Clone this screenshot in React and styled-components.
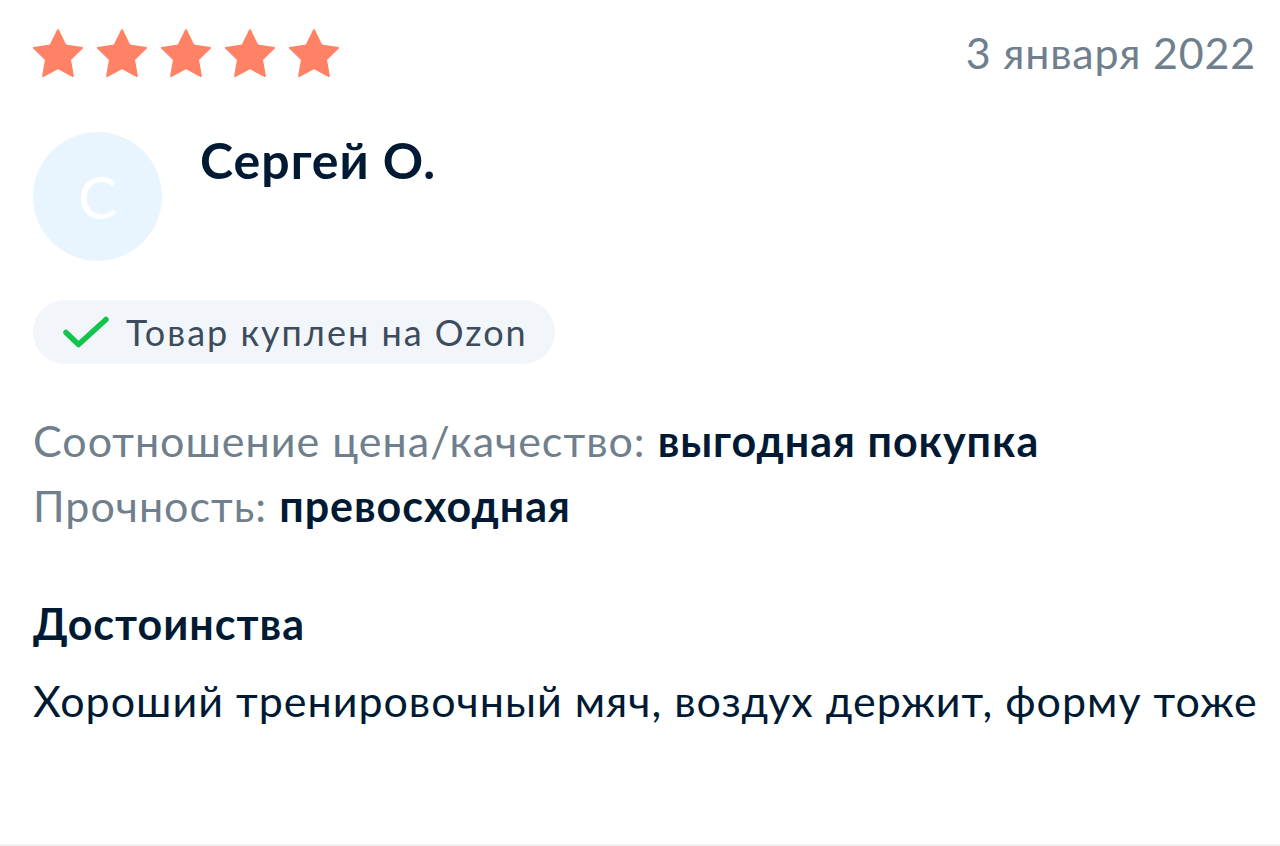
import React from "react";
import styled, { createGlobalStyle } from "styled-components";

const GlobalStyle = createGlobalStyle`
  html, body {
    margin: 0;
    padding: 0;
    background: #fff;
  }
  body {
    font-family: Lato, "Noto Sans", sans-serif;
    color: #001a34;
  }
`;

const Card = styled.div`
  box-sizing: border-box;
  width: 1280px;
  height: 846px;
  padding: 27px 24px 0 33px;
  border-bottom: 2px solid #f0f0f0;
  display: flex;
  flex-direction: column;
`;

const TopRow = styled.div`
  display: flex;
  align-items: center;
  justify-content: space-between;
`;

const Stars = styled.div`
  display: flex;
  gap: 14px;
`;

const DateText = styled.div`
  font-size: 43px;
  line-height: 1.2;
  letter-spacing: 0.8px;
  color: #707f8d;
`;

const Author = styled.div`
  display: flex;
  align-items: flex-start;
  gap: 38px;
  margin-top: 53px;
`;

const Avatar = styled.div`
  flex: none;
  width: 129px;
  height: 129px;
  border-radius: 50%;
  background: #e9f5fe;
  color: #fff;
  font-size: 58px;
  display: flex;
  align-items: center;
  justify-content: center;
`;

const Name = styled.div`
  font-size: 50px;
  line-height: 1.2;
  letter-spacing: 1px;
  font-weight: 700;
  color: #001a34;
  margin-top: -2px;
`;

const Badge = styled.div`
  align-self: flex-start;
  display: flex;
  align-items: center;
  gap: 16px;
  height: 64px;
  padding: 0 27px 0 29px;
  border-radius: 32px;
  background: #f2f5f9;
  margin-top: 39px;
  font-size: 36px;
  letter-spacing: 2px;
  color: #3d4c5c;
`;

const Props = styled.div`
  margin-top: 51px;
  display: flex;
  flex-direction: column;
  gap: 13px;
`;

const PropLine = styled.div`
  font-size: 43px;
  line-height: 52px;
  letter-spacing: 1px;
  color: #707f8d;
  white-space: nowrap;
`;

const PropValue = styled.span`
  color: #001a34;
  font-weight: 700;
`;

const SectionTitle = styled.div`
  margin-top: 66px;
  font-size: 43px;
  line-height: 52px;
  letter-spacing: 1px;
  font-weight: 700;
`;

const SectionText = styled.div`
  margin-top: 25px;
  font-size: 43px;
  line-height: 52px;
  letter-spacing: 1px;
  white-space: nowrap;
`;

const Star = () => (
  <svg width="50" height="50" viewBox="2 1.6 20 20">
    <path
      d="M12 2.4l3 6.1 6.7 1-4.85 4.7 1.15 6.7L12 17.7l-6 3.2 1.15-6.7L2.3 9.5l6.7-1z"
      fill="#ff8266"
      stroke="#ff8266"
      strokeWidth="0.7"
      strokeLinejoin="round"
    />
  </svg>
);

const Check = () => (
  <svg width="48" height="32" viewBox="0 0 48 32">
    <path
      d="M4 16.5l12.5 12L44 3.5"
      fill="none"
      stroke="#10c44c"
      strokeWidth="5.5"
      strokeLinecap="round"
      strokeLinejoin="round"
    />
  </svg>
);

export default function App() {
  return (
    <>
      <GlobalStyle />
      <Card>
        <TopRow>
          <Stars>
            {[0, 1, 2, 3, 4].map((i) => (
              <Star key={i} />
            ))}
          </Stars>
          <DateText>3 января 2022</DateText>
        </TopRow>
        <Author>
          <Avatar>С</Avatar>
          <Name>Сергей О.</Name>
        </Author>
        <Badge>
          <Check />
          Товар куплен на Ozon
        </Badge>
        <Props>
          <PropLine>
            Соотношение цена/качество: <PropValue>выгодная покупка</PropValue>
          </PropLine>
          <PropLine>
            Прочность: <PropValue>превосходная</PropValue>
          </PropLine>
        </Props>
        <SectionTitle>Достоинства</SectionTitle>
        <SectionText>Хороший тренировочный мяч, воздух держит, форму тоже</SectionText>
      </Card>
    </>
  );
}
